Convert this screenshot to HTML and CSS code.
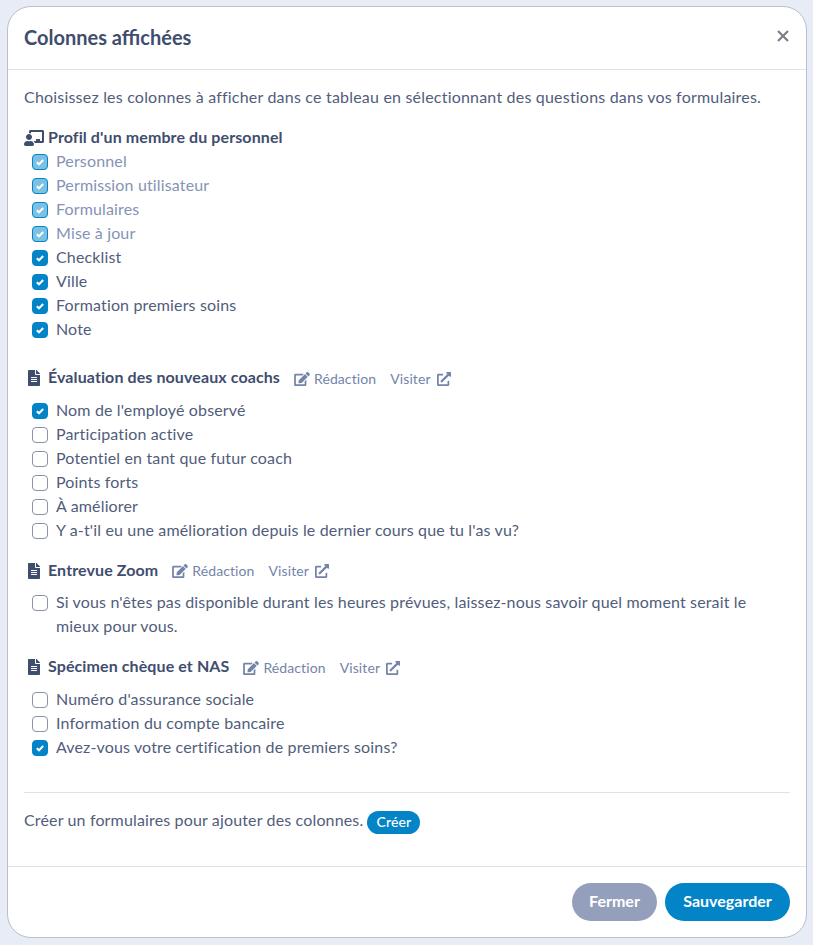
FILE: index.html
```html
<!DOCTYPE html>
<html lang="fr">
<head>
    <meta charset="UTF-8">
    <meta name="viewport" content="width=device-width, initial-scale=1.0">
    <title>Colonnes affichées</title>
    <link rel="stylesheet" href="styles.css">
</head>
<body>
    <svg class="icon-defs" aria-hidden="true">
        <symbol id="i-check" viewBox="0 0 16 16"><polyline points="4.8,8.2 7,10.3 11.2,6" fill="none" stroke="currentColor" stroke-width="2"/></symbol>
        <symbol id="i-board" viewBox="0 0 640 512"><path d="M208 352c-2.39 0-4.78.35-7.06 1.09C187.98 357.3 174.35 360 160 360c-14.35 0-27.98-2.7-40.95-6.91-2.28-.74-4.66-1.09-7.05-1.09C49.94 352-.33 402.48 0 464.62.14 490.88 21.73 512 48 512h224c26.27 0 47.86-21.12 48-47.38.33-62.14-49.94-112.62-112-112.62zm-48-32c53.02 0 96-42.98 96-96s-42.98-96-96-96-96 42.98-96 96 42.98 96 96 96zM592 0H208c-26.47 0-48 22.25-48 49.59V96c23.42 0 45.1 6.78 64 17.8V64h352v288h-64v-64H384v64h-76.24c19.1 16.69 33.12 38.73 39.69 64H592c26.47 0 48-22.25 48-49.59V49.59C640 22.25 618.47 0 592 0z"/></symbol>
        <symbol id="i-file" viewBox="0 0 384 512"><path d="M224 136V0H24C10.7 0 0 10.7 0 24v464c0 13.3 10.7 24 24 24h336c13.3 0 24-10.7 24-24V160H248c-13.2 0-24-10.8-24-24zm64 236c0 6.6-5.4 12-12 12H108c-6.6 0-12-5.4-12-12v-8c0-6.6 5.4-12 12-12h168c6.6 0 12 5.4 12 12v8zm0-64c0 6.6-5.4 12-12 12H108c-6.6 0-12-5.4-12-12v-8c0-6.6 5.4-12 12-12h168c6.6 0 12 5.4 12 12v8zm0-72v8c0 6.6-5.4 12-12 12H108c-6.6 0-12-5.4-12-12v-8c0-6.6 5.4-12 12-12h168c6.6 0 12 5.4 12 12zm96-114.1v6.1H256V0h6.1c6.4 0 12.5 2.5 17 7l97.9 98c4.5 4.5 7 10.6 7 16.9z"/></symbol>
        <symbol id="i-edit" viewBox="0 0 576 512"><path d="M402.6 83.2l90.2 90.2c3.8 3.8 3.8 10 0 13.8L274.4 405.6l-92.8 10.3c-12.4 1.4-22.9-9.1-21.5-21.5l10.3-92.8L388.8 83.2c3.8-3.8 10-3.8 13.8 0zm162-22.9l-48.8-48.8c-15.2-15.2-39.9-15.2-55.2 0l-35.4 35.4c-3.8 3.8-3.8 10 0 13.8l90.2 90.2c3.8 3.8 10 3.8 13.8 0l35.4-35.4c15.2-15.3 15.2-40 0-55.2zM384 346.2V448H64V128h229.8c3.2 0 6.2-1.3 8.5-3.5l40-40c7.6-7.6 2.2-20.5-8.5-20.5H48C21.5 64 0 85.5 0 112v352c0 26.5 21.5 48 48 48h352c26.5 0 48-21.5 48-48V306.2c0-10.7-12.9-16-20.5-8.5l-40 40c-2.2 2.3-3.5 5.3-3.5 8.5z"/></symbol>
        <symbol id="i-link" viewBox="0 0 512 512"><path d="M432,320H400a16,16,0,0,0-16,16V448H64V128H208a16,16,0,0,0,16-16V80a16,16,0,0,0-16-16H48A48,48,0,0,0,0,112V464a48,48,0,0,0,48,48H400a48,48,0,0,0,48-48V336A16,16,0,0,0,432,320ZM488,0h-128c-21.37,0-32.05,25.91-17,41l35.73,35.73L135,320.37a24,24,0,0,0,0,34L157.67,377a24,24,0,0,0,34,0L435.28,133.32,471,169c15,15,41,4.5,41-17V24A24,24,0,0,0,488,0Z"/></symbol>
    </svg>

    <div class="modal">
        <div class="modal-header">
            <h1>Colonnes affichées</h1>
            <button class="close-btn" aria-label="Fermer">
                <svg viewBox="0 0 14 14" width="14" height="14"><path d="M2 2l10 10M12 2L2 12" stroke="currentColor" stroke-width="2.2" fill="none"/></svg>
            </button>
        </div>

        <div class="modal-body">
            <p class="intro">Choisissez les colonnes à afficher dans ce tableau en sélectionnant des questions dans vos formulaires.</p>

            <div class="section section-profile">
                <div class="section-title title-profile">
                    <svg class="icon-board"><use href="#i-board"/></svg>
                    <span class="title-text">Profil d'un membre du personnel</span>
                </div>
                <div class="check-row disabled"><span class="box on"><svg><use href="#i-check"/></svg></span><span class="row-text">Personnel</span></div>
                <div class="check-row disabled"><span class="box on"><svg><use href="#i-check"/></svg></span><span class="row-text">Permission utilisateur</span></div>
                <div class="check-row disabled"><span class="box on"><svg><use href="#i-check"/></svg></span><span class="row-text">Formulaires</span></div>
                <div class="check-row disabled"><span class="box on"><svg><use href="#i-check"/></svg></span><span class="row-text">Mise à jour</span></div>
                <div class="check-row"><span class="box on"><svg><use href="#i-check"/></svg></span><span class="row-text">Checklist</span></div>
                <div class="check-row"><span class="box on"><svg><use href="#i-check"/></svg></span><span class="row-text">Ville</span></div>
                <div class="check-row"><span class="box on"><svg><use href="#i-check"/></svg></span><span class="row-text">Formation premiers soins</span></div>
                <div class="check-row"><span class="box on"><svg><use href="#i-check"/></svg></span><span class="row-text">Note</span></div>
            </div>

            <div class="section">
                <div class="section-title">
                    <svg class="icon-file"><use href="#i-file"/></svg>
                    <span class="title-text">Évaluation des nouveaux coachs</span>
                    <a class="title-link"><svg class="icon-edit"><use href="#i-edit"/></svg>Rédaction</a>
                    <a class="title-link">Visiter<svg class="icon-link"><use href="#i-link"/></svg></a>
                </div>
                <div class="check-row"><span class="box on"><svg><use href="#i-check"/></svg></span><span class="row-text">Nom de l'employé observé</span></div>
                <div class="check-row"><span class="box"></span><span class="row-text">Participation active</span></div>
                <div class="check-row"><span class="box"></span><span class="row-text">Potentiel en tant que futur coach</span></div>
                <div class="check-row"><span class="box"></span><span class="row-text">Points forts</span></div>
                <div class="check-row"><span class="box"></span><span class="row-text">À améliorer</span></div>
                <div class="check-row"><span class="box"></span><span class="row-text">Y a-t'il eu une amélioration depuis le dernier cours que tu l'as vu?</span></div>
            </div>

            <div class="section">
                <div class="section-title">
                    <svg class="icon-file"><use href="#i-file"/></svg>
                    <span class="title-text">Entrevue Zoom</span>
                    <a class="title-link"><svg class="icon-edit"><use href="#i-edit"/></svg>Rédaction</a>
                    <a class="title-link">Visiter<svg class="icon-link"><use href="#i-link"/></svg></a>
                </div>
                <div class="check-row"><span class="box"></span><span class="row-text">Si vous n'êtes pas disponible durant les heures prévues, laissez-nous savoir quel moment serait le mieux pour vous.</span></div>
            </div>

            <div class="section">
                <div class="section-title">
                    <svg class="icon-file"><use href="#i-file"/></svg>
                    <span class="title-text">Spécimen chèque et NAS</span>
                    <a class="title-link"><svg class="icon-edit"><use href="#i-edit"/></svg>Rédaction</a>
                    <a class="title-link">Visiter<svg class="icon-link"><use href="#i-link"/></svg></a>
                </div>
                <div class="check-row"><span class="box"></span><span class="row-text">Numéro d'assurance sociale</span></div>
                <div class="check-row"><span class="box"></span><span class="row-text">Information du compte bancaire</span></div>
                <div class="check-row"><span class="box on"><svg><use href="#i-check"/></svg></span><span class="row-text">Avez-vous votre certification de premiers soins?</span></div>
            </div>

            <hr class="divider">

            <div class="create-line"><span class="row-text">Créer un formulaires pour ajouter des colonnes.</span><a class="pill">Créer</a></div>
        </div>

        <div class="modal-footer">
            <button class="btn btn-grey">Fermer</button>
            <button class="btn btn-blue">Sauvegarder</button>
        </div>
    </div>
</body>
</html>
```

FILE: styles.css
```css
* {
    margin: 0;
    padding: 0;
    box-sizing: border-box;
}

:root {
    --text-color: #515d7b;
    --title-color: #3f4d6e;
    --muted-color: #7484a9;
    --disabled-color: #8593b5;
    --primary-color: #0284c7;
    --border-color: #dfe2e8;
}

body {
    background-color: #e8ecf6;
    padding: 6px 6px 7px 7px;
    font-family: Lato, sans-serif;
    font-size: 16px;
    line-height: 24px;
    letter-spacing: 0.2px;
    color: var(--text-color);
}

.icon-defs {
    display: none;
}

.modal {
    height: 932px;
    display: flex;
    flex-direction: column;
    background: white;
    border: 1px solid #b9bfcc;
    border-radius: 24px;
}

.modal-header {
    height: 63px;
    display: flex;
    justify-content: space-between;
    align-items: center;
    padding: 0 16px;
    border-bottom: 1px solid var(--border-color);
}

.modal-header h1 {
    margin-bottom: 3px;
    font-size: 20px;
    font-weight: 700;
    letter-spacing: 0;
    color: var(--title-color);
}

.close-btn {
    display: flex;
    margin-bottom: 4px;
    border: none;
    background: none;
    color: #7b7f87;
    cursor: pointer;
}

.modal-body {
    flex: 1;
    padding: 16px;
}

.intro {
    margin: -1px 0 17px;
}

.section {
    margin-bottom: 16px;
}

.section-profile {
    margin-bottom: 24px;
}

.section-title {
    height: 24.5px;
    margin-bottom: 8px;
    display: flex;
    align-items: center;
    padding-left: 4px;
    font-weight: 700;
    letter-spacing: 0.1px;
    color: var(--title-color);
}

.title-text {
    margin-bottom: 2px;
}

.title-profile {
    height: 24px;
    margin-bottom: 0;
    padding-left: 0;
}

.icon-board {
    width: 20px;
    height: 16px;
    margin-right: 4px;
    fill: currentColor;
}

.icon-file {
    width: 12px;
    height: 16px;
    margin-right: 8px;
    fill: currentColor;
}

.title-link {
    display: flex;
    align-items: center;
    margin-left: 14px;
    padding-top: 1px;
    font-size: 14px;
    font-weight: 400;
    color: var(--muted-color);
}

.icon-edit {
    width: 16px;
    height: 14px;
    margin-right: 4px;
    fill: currentColor;
}

.icon-link {
    width: 14px;
    height: 14px;
    margin-left: 6px;
    fill: currentColor;
}

.check-row {
    display: flex;
    align-items: flex-start;
    padding-left: 8px;
    letter-spacing: 0.15px;
}

.row-text {
    margin: -1px 0 1px;
}

.box {
    flex: none;
    width: 16px;
    height: 16px;
    margin: 4px 8px 0 0;
    border: 1px solid #8b93a7;
    border-radius: 4px;
    background: white;
}

.box svg {
    display: block;
    width: 16px;
    height: 16px;
    margin: -1px;
    color: white;
}

.box.on {
    background: var(--primary-color);
    border-color: var(--primary-color);
}

.check-row.disabled {
    color: var(--disabled-color);
}

.check-row.disabled .box {
    background: #7cc0e3;
}

.divider {
    border: none;
    border-top: 1px solid var(--border-color);
    margin: 32px 0 16px;
}

.create-line {
    display: flex;
    align-items: flex-start;
    gap: 4px;
    letter-spacing: 0.15px;
}

.pill {
    width: 53px;
    margin-top: 2px;
    padding-bottom: 2px;
    border-radius: 12px;
    background: var(--primary-color);
    color: white;
    font-size: 14px;
    font-weight: 500;
    line-height: 21px;
    text-align: center;
    cursor: pointer;
}

.modal-footer {
    display: flex;
    justify-content: flex-end;
    gap: 8px;
    padding: 16px;
    border-top: 1px solid var(--border-color);
}

.btn {
    height: 38px;
    padding-bottom: 3px;
    border: none;
    border-radius: 19px;
    color: white;
    font-family: inherit;
    font-size: 16px;
    font-weight: 700;
    cursor: pointer;
}

.btn-grey {
    width: 85px;
    background: #94a0bb;
}

.btn-blue {
    width: 125px;
    background: var(--primary-color);
}
```
